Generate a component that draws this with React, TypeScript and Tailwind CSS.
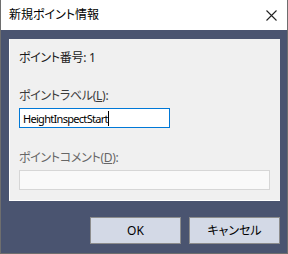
import React from 'react'

const font = '"Noto Sans", "Noto Sans CJK JP", sans-serif'

export default function App() {
  return (
    <div
      className="w-[288px] h-[254px] flex flex-col bg-[#4a5470] border border-t-0 border-[#6e6e6e] text-[12px] text-[#1a1a1a] [font-feature-settings:'palt']"
      style={{ fontFamily: font }}
    >
      {/* Title bar */}
      <div className="h-[30px] bg-white flex items-center justify-between pl-[8px] pr-[9px]">
        <span className="text-[12px] text-black leading-none">新規ポイント情報</span>
        <svg width="11" height="11" viewBox="0 0 11 11" className="mr-[1px]">
          <path d="M0.5 0.5 L10.5 10.5 M10.5 0.5 L0.5 10.5" stroke="#222" strokeWidth="1.1" />
        </svg>
      </div>

      {/* Content panel */}
      <div className="mt-[9px] ml-[8px] w-[271px] h-[162px] bg-[#f0f0f0] border-l border-b border-white pl-[9px] pt-[11px] flex flex-col">
        <div className="leading-[16px] tracking-[-0.3px]">ポイント番号: 1</div>

        <div className="mt-[22px] leading-[16px] text-[#3a3a3a] tracking-[-0.3px]">
          ポイントラベル(<span className="underline">L</span>):
        </div>
        <div className="mt-[4px] w-[151px] h-[20px] bg-white border border-[#0078d7] flex items-center pl-[3px] text-black">
          <span className="leading-none text-[11px] tracking-[-0.7px]" style={{ fontFamily: '"Noto Sans", sans-serif' }}>
            HeightInspectStart
          </span>
          <span className="w-[1px] h-[15px] bg-black" />
        </div>

        <div className="mt-[22px] leading-[16px] text-[#666] tracking-[-0.3px]">
          ポイントコメント(<span className="underline">D</span>):
        </div>
        <div className="mt-[4px] w-[251px] h-[20px] bg-[#f9f9f9] border border-[#d6d6d6]" />
      </div>

      {/* Buttons */}
      <div className="mt-[16px] flex justify-end gap-[8px] pr-[7px]">
        <button className="w-[91px] h-[27px] bg-[#d3d9e6] border-[1.5px] border-[#8c8c8c] text-black text-[12px] flex items-center justify-center">
          OK
        </button>
        <button className="w-[91px] h-[27px] bg-[#d3d9e6] border-[1.5px] border-[#8c8c8c] text-black text-[12px] flex items-center justify-center">
          キャンセル
        </button>
      </div>
    </div>
  )
}
